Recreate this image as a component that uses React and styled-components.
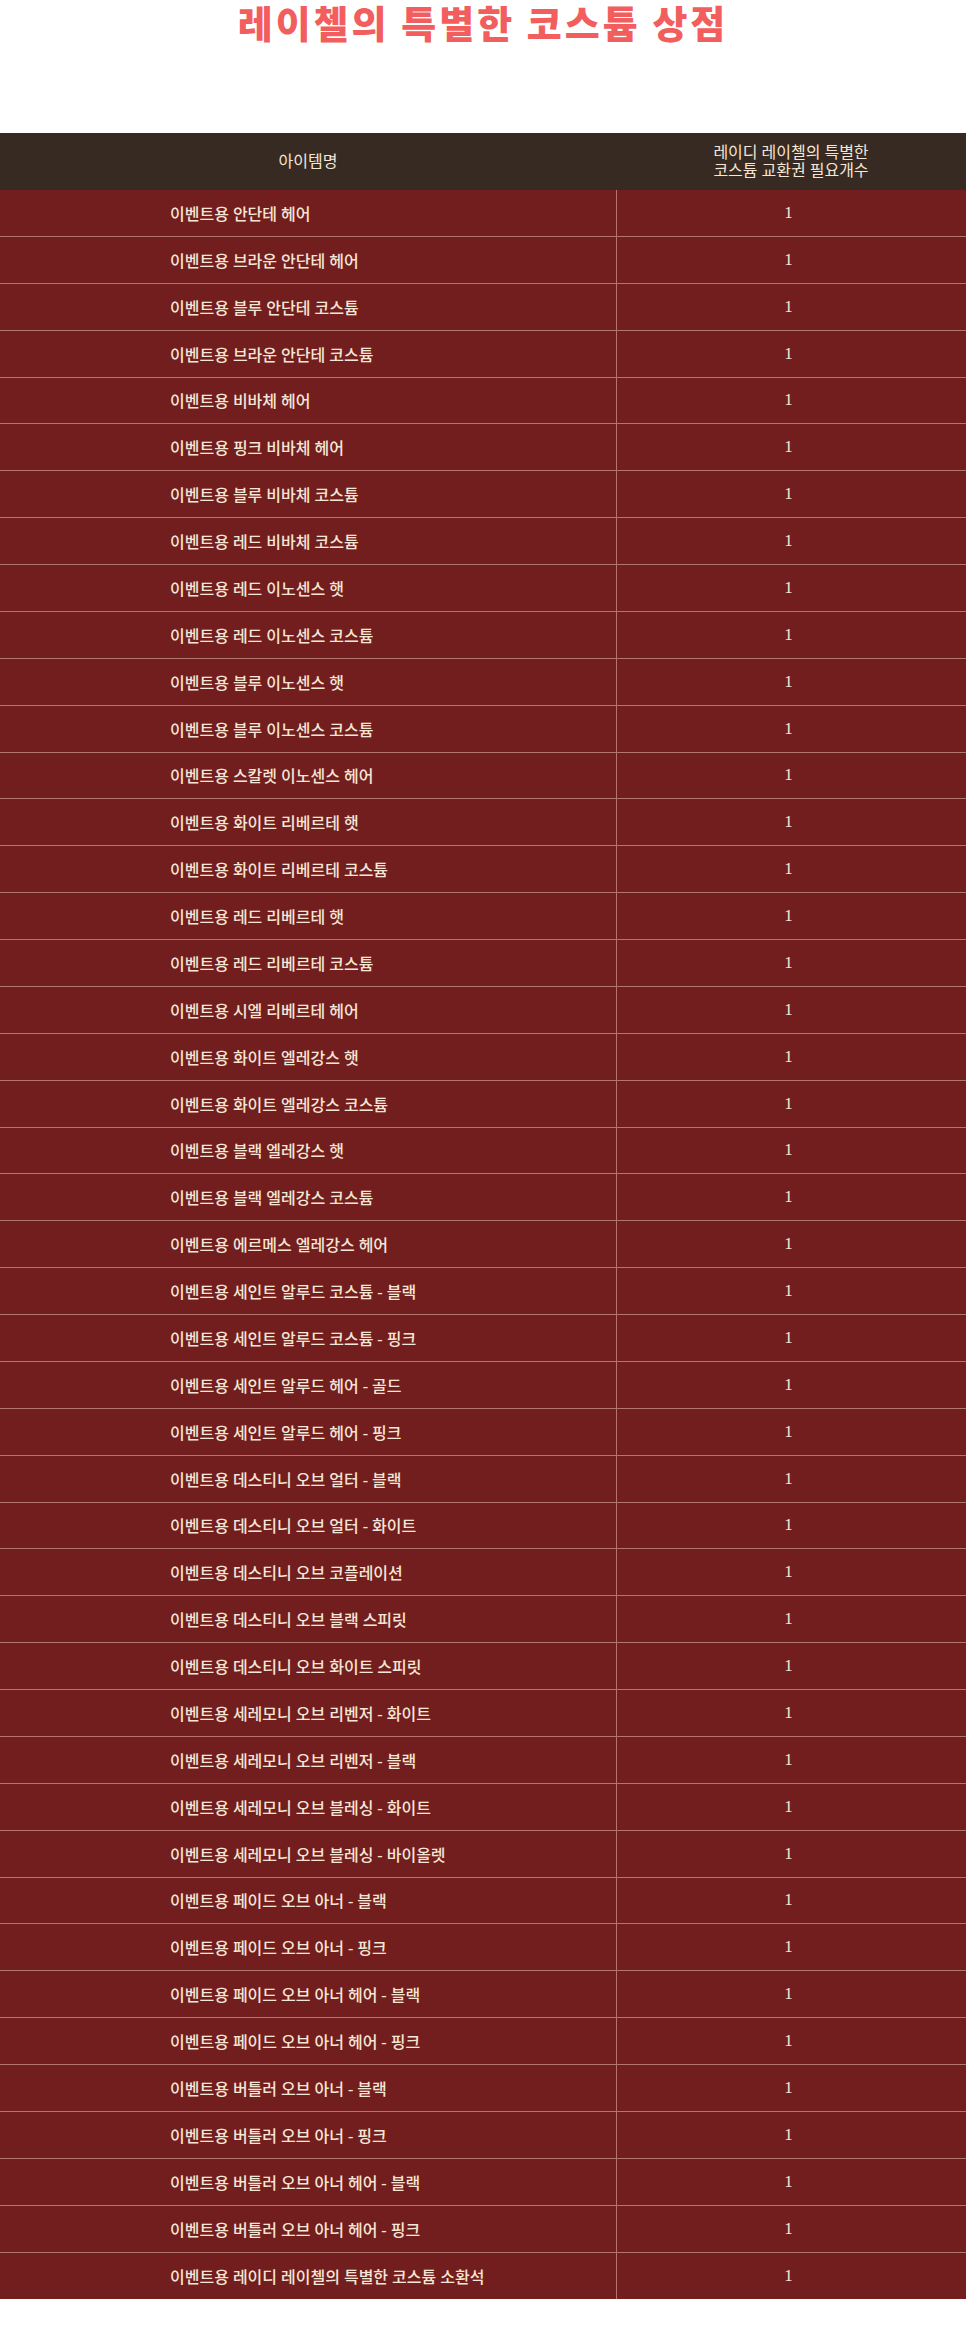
import React from 'react';
import styled, { createGlobalStyle } from 'styled-components';

const GlobalStyle = createGlobalStyle`
  html, body {
    margin: 0;
    padding: 0;
    background: #ffffff;
  }
  body {
    font-family: "Liberation Serif", "Noto Sans CJK KR", serif;
  }
`;

const PageStyled = styled.div`
  width: 966px;
  min-height: 2351px;
  background: #ffffff;
`;

const TitleStyled = styled.h1`
  margin: 0;
  height: 133px;
  text-align: center;
  font-family: "Noto Sans CJK KR", sans-serif;
  font-weight: 900;
  font-size: 38px;
  line-height: 44px;
  letter-spacing: 3px;
  color: #f25e5e;
`;

const TableStyled = styled.div`
  display: flex;
  flex-direction: column;
  color: #f5e6d6;
  font-family: "Liberation Serif", "Noto Sans CJK KR", serif;
`;

const HeaderRow = styled.div`
  display: grid;
  grid-template-columns: 616px 1fr;
  height: 57px;
  background: #372a22;
  font-size: 16px;
  line-height: 18px;
`;

const HeaderCell = styled.div`
  display: flex;
  align-items: center;
  justify-content: center;
  text-align: center;
`;

const Row = styled.div`
  display: grid;
  grid-template-columns: 616px 1px 1fr;
  height: 46.88px;
  box-sizing: border-box;
  background: #721e1e;
  border-bottom: ${(p) => (p.$last ? 'none' : '1px solid #b27570')};
  font-size: 16px;
`;

const NameCell = styled.div`
  display: flex;
  align-items: center;
  padding-left: 170px;
  font-weight: 500;
`;

const Divider = styled.div`
  background: #b27570;
`;

const CountCell = styled.div`
  display: flex;
  align-items: center;
  justify-content: center;
  padding-right: 6px;
  font-size: 17px;
`;

const items = [
  '이벤트용 안단테 헤어',
  '이벤트용 브라운 안단테 헤어',
  '이벤트용 블루 안단테 코스튬',
  '이벤트용 브라운 안단테 코스튬',
  '이벤트용 비바체 헤어',
  '이벤트용 핑크 비바체 헤어',
  '이벤트용 블루 비바체 코스튬',
  '이벤트용 레드 비바체 코스튬',
  '이벤트용 레드 이노센스 햇',
  '이벤트용 레드 이노센스 코스튬',
  '이벤트용 블루 이노센스 햇',
  '이벤트용 블루 이노센스 코스튬',
  '이벤트용 스칼렛 이노센스 헤어',
  '이벤트용 화이트 리베르테 햇',
  '이벤트용 화이트 리베르테 코스튬',
  '이벤트용 레드 리베르테 햇',
  '이벤트용 레드 리베르테 코스튬',
  '이벤트용 시엘 리베르테 헤어',
  '이벤트용 화이트 엘레강스 햇',
  '이벤트용 화이트 엘레강스 코스튬',
  '이벤트용 블랙 엘레강스 햇',
  '이벤트용 블랙 엘레강스 코스튬',
  '이벤트용 에르메스 엘레강스 헤어',
  '이벤트용 세인트 알루드 코스튬 - 블랙',
  '이벤트용 세인트 알루드 코스튬 - 핑크',
  '이벤트용 세인트 알루드 헤어 - 골드',
  '이벤트용 세인트 알루드 헤어 - 핑크',
  '이벤트용 데스티니 오브 얼터 - 블랙',
  '이벤트용 데스티니 오브 얼터 - 화이트',
  '이벤트용 데스티니 오브 코플레이션',
  '이벤트용 데스티니 오브 블랙 스피릿',
  '이벤트용 데스티니 오브 화이트 스피릿',
  '이벤트용 세레모니 오브 리벤저 - 화이트',
  '이벤트용 세레모니 오브 리벤저 - 블랙',
  '이벤트용 세레모니 오브 블레싱 - 화이트',
  '이벤트용 세레모니 오브 블레싱 - 바이올렛',
  '이벤트용 페이드 오브 아너 - 블랙',
  '이벤트용 페이드 오브 아너 - 핑크',
  '이벤트용 페이드 오브 아너 헤어 - 블랙',
  '이벤트용 페이드 오브 아너 헤어 - 핑크',
  '이벤트용 버틀러 오브 아너 - 블랙',
  '이벤트용 버틀러 오브 아너 - 핑크',
  '이벤트용 버틀러 오브 아너 헤어 - 블랙',
  '이벤트용 버틀러 오브 아너 헤어 - 핑크',
  '이벤트용 레이디 레이첼의 특별한 코스튬 소환석',
];

export default function App() {
  return (
    <PageStyled>
      <GlobalStyle />
      <TitleStyled>레이첼의 특별한 코스튬 상점</TitleStyled>
      <TableStyled>
        <HeaderRow>
          <HeaderCell>아이템명</HeaderCell>
          <HeaderCell>
            레이디 레이첼의 특별한
            <br />
            코스튬 교환권 필요개수
          </HeaderCell>
        </HeaderRow>
        {items.map((name, i) => (
          <Row key={name} $last={i === items.length - 1}>
            <NameCell>{name}</NameCell>
            <Divider />
            <CountCell>1</CountCell>
          </Row>
        ))}
      </TableStyled>
    </PageStyled>
  );
}
